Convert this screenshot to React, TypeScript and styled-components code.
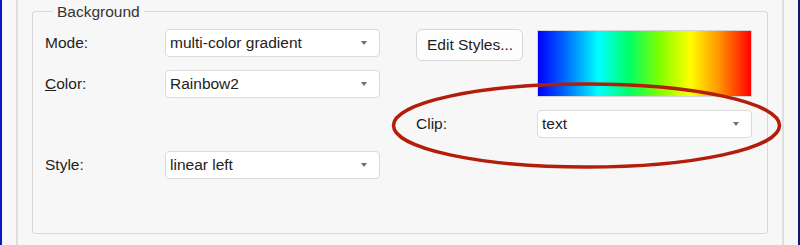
import React from "react";
import styled, { createGlobalStyle } from "styled-components";

const GlobalStyle = createGlobalStyle`
  html, body {
    margin: 0;
    padding: 0;
    background: #f7f7f7;
  }
  body {
    font-family: "Liberation Sans", Arial, sans-serif;
    font-size: 15.5px;
    color: #222;
  }
`;

const Page = styled.div`
  position: relative;
  width: 800px;
  height: 245px;
  overflow: hidden;
`;

const Window = styled.div`
  display: flex;
  box-sizing: border-box;
  height: 245px;
  padding: 0 14px;
  border-left: 2px solid #0a14c8;
  border-right: 2px solid #0c1a72;
`;

const Pane = styled.div`
  flex: 1;
  box-sizing: border-box;
  padding: 3px 14px 0 14px;
  border-left: 2px solid #dedede;
  border-right: 2px solid #dedede;
`;

const Group = styled.fieldset`
  box-sizing: border-box;
  height: 231px;
  margin: 0;
  padding: 9px 15px 0 12px;
  border: 1px solid #d9d9d9;
  border-radius: 3px;
  min-width: 0;
`;

const Legend = styled.legend`
  margin-left: 8px;
  padding: 0 4px;
  font-size: 15.5px;
  line-height: 17px;
  color: #333;
`;

const Grid = styled.div`
  display: grid;
  grid-template-columns: 120px 215px 36px 121px 215px;
  grid-auto-rows: 28px;
  row-gap: 12.67px;
  align-items: center;
`;

const Label = styled.div<{ $col?: number }>`
  grid-column: ${(p) => p.$col ?? 1};
  font-size: 15.5px;
  color: #1e1e1e;
  white-space: nowrap;
`;

const Dropdown = styled.div<{ $col?: number }>`
  grid-column: ${(p) => p.$col ?? 2};
  box-sizing: border-box;
  height: 28px;
  display: flex;
  align-items: center;
  justify-content: space-between;
  padding: 0 12px 0 4px;
  background: #fff;
  border: 1px solid #dadada;
  border-radius: 4px;
  font-size: 15.5px;
  color: #222;
`;

const Caret = styled.span`
  width: 0;
  height: 0;
  border-left: 3.5px solid transparent;
  border-right: 3.5px solid transparent;
  border-top: 4px solid #6f6f6f;
`;

const Button = styled.button`
  grid-column: 4;
  grid-row: 1;
  align-self: start;
  justify-self: start;
  box-sizing: border-box;
  width: 107px;
  height: 32px;
  padding: 0 10px;
  background: #fdfdfd;
  border: 1px solid #d6d6d6;
  border-radius: 6px;
  font-family: "Liberation Sans", Arial, sans-serif;
  font-size: 15.5px;
  color: #1e1e1e;
  white-space: nowrap;
`;

const Preview = styled.div`
  grid-column: 5;
  grid-row: 1 / span 2;
  align-self: stretch;
  margin: 1px 0;
  border: 1px solid #d4d4d4;
  background: linear-gradient(
    to right,
    #0000ff 0%,
    #0062ff 12%,
    #00ffff 28.5%,
    #00ff64 43%,
    #80ff00 57%,
    #ffff00 71.5%,
    #ff9400 85%,
    #ff0000 100%
  );
`;

const Markup = styled.svg`
  position: absolute;
  left: 0;
  top: 0;
  pointer-events: none;
`;

type Field = { label: React.ReactNode; value: string };

const fields: Field[] = [
  { label: "Mode:", value: "multi-color gradient" },
  {
    label: (
      <>
        <u>C</u>olor:
      </>
    ),
    value: "Rainbow2",
  },
];

export default function App() {
  return (
    <Page>
      <GlobalStyle />
      <Window>
        <Pane>
          <Group>
            <Legend>Background</Legend>
            <Grid>
              {fields.map((f, i) => (
                <React.Fragment key={i}>
                  <Label style={{ gridRow: i + 1 }}>{f.label}</Label>
                  <Dropdown style={{ gridRow: i + 1 }}>
                    {f.value}
                    <Caret />
                  </Dropdown>
                </React.Fragment>
              ))}
              <Button>Edit Styles...</Button>
              <Preview />
              <Label $col={4} style={{ gridRow: 3 }}>
                Clip:
              </Label>
              <Dropdown $col={5} style={{ gridRow: 3 }}>
                text
                <Caret />
              </Dropdown>
              <Label style={{ gridRow: 4 }}>Style:</Label>
              <Dropdown style={{ gridRow: 4 }}>
                linear left
                <Caret />
              </Dropdown>
            </Grid>
          </Group>
        </Pane>
      </Window>
      <Markup width="800" height="245" viewBox="0 0 800 245">
        <ellipse
          cx="586.5"
          cy="125.5"
          rx="193"
          ry="41.5"
          fill="none"
          stroke="#b31e0a"
          strokeWidth="3.5"
        />
      </Markup>
    </Page>
  );
}
